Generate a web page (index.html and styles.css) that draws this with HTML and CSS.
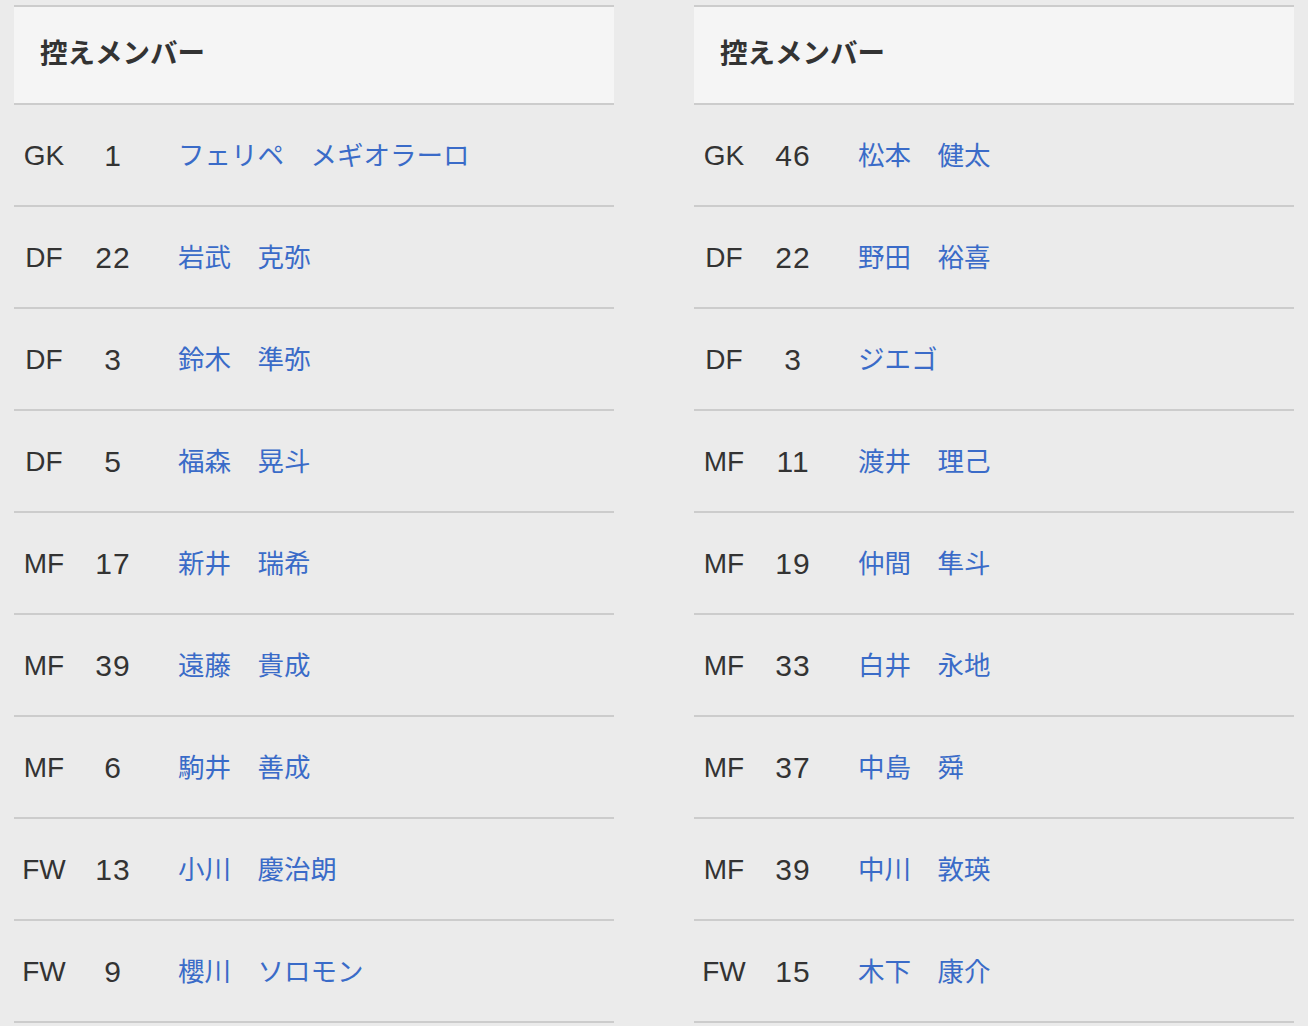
FILE: index.html
```html
<!DOCTYPE html>
<html lang="ja">
<head>
<meta charset="utf-8">
<title>控えメンバー</title>
<link rel="stylesheet" href="styles.css">
</head>
<body>
<div class="page">
  <section class="squad">
    <h2 class="squad-head">控えメンバー</h2>
    <ul class="rows">
      <li class="row"><span class="pos">GK</span><span class="num">1</span><a class="name" href="#">フェリペ　メギオラーロ</a></li>
      <li class="row"><span class="pos">DF</span><span class="num">22</span><a class="name" href="#">岩武　克弥</a></li>
      <li class="row"><span class="pos">DF</span><span class="num">3</span><a class="name" href="#">鈴木　準弥</a></li>
      <li class="row"><span class="pos">DF</span><span class="num">5</span><a class="name" href="#">福森　晃斗</a></li>
      <li class="row"><span class="pos">MF</span><span class="num">17</span><a class="name" href="#">新井　瑞希</a></li>
      <li class="row"><span class="pos">MF</span><span class="num">39</span><a class="name" href="#">遠藤　貴成</a></li>
      <li class="row"><span class="pos">MF</span><span class="num">6</span><a class="name" href="#">駒井　善成</a></li>
      <li class="row"><span class="pos">FW</span><span class="num">13</span><a class="name" href="#">小川　慶治朗</a></li>
      <li class="row"><span class="pos">FW</span><span class="num">9</span><a class="name" href="#">櫻川　ソロモン</a></li>
    </ul>
  </section>
  <section class="squad">
    <h2 class="squad-head">控えメンバー</h2>
    <ul class="rows">
      <li class="row"><span class="pos">GK</span><span class="num">46</span><a class="name" href="#">松本　健太</a></li>
      <li class="row"><span class="pos">DF</span><span class="num">22</span><a class="name" href="#">野田　裕喜</a></li>
      <li class="row"><span class="pos">DF</span><span class="num">3</span><a class="name" href="#">ジエゴ</a></li>
      <li class="row"><span class="pos">MF</span><span class="num">11</span><a class="name" href="#">渡井　理己</a></li>
      <li class="row"><span class="pos">MF</span><span class="num">19</span><a class="name" href="#">仲間　隼斗</a></li>
      <li class="row"><span class="pos">MF</span><span class="num">33</span><a class="name" href="#">白井　永地</a></li>
      <li class="row"><span class="pos">MF</span><span class="num">37</span><a class="name" href="#">中島　舜</a></li>
      <li class="row"><span class="pos">MF</span><span class="num">39</span><a class="name" href="#">中川　敦瑛</a></li>
      <li class="row"><span class="pos">FW</span><span class="num">15</span><a class="name" href="#">木下　康介</a></li>
    </ul>
  </section>
</div>
</body>
</html>
```
FILE: styles.css
```css
html, body {
  margin: 0;
  padding: 0;
  background: #ebebeb;
}
body {
  font-family: "Liberation Sans", "Noto Sans CJK JP", sans-serif;
  color: #333;
}
.page {
  display: flex;
  gap: 80px;
  padding: 5px 14px 0;
}
.squad {
  flex: 1;
  border-top: 2px solid #cccccc;
}
.squad-head {
  margin: 0;
  box-sizing: border-box;
  height: 96px;
  display: flex;
  align-items: center;
  padding: 0 0 8px 26px;
  background: #f5f5f5;
  border-bottom: 2px solid #cccccc;
  font-size: 27.5px;
  font-weight: 700;
  color: #333;
  font-family: "Noto Sans CJK JP", sans-serif;
}
.squad-head {
  height: 98px;
}
.rows {
  list-style: none;
  margin: 0;
  padding: 0;
}
.row {
  height: 100px;
  display: grid;
  grid-template-columns: 60px 78px 1fr;
  align-items: center;
  border-bottom: 2px solid #cccccc;
  font-size: 28px;
}
.pos, .num {
  text-align: center;
  color: #333;
  padding-top: 2px;
}
.num {
  font-size: 30px;
  letter-spacing: 1px;
}
.name {
  padding: 0 0 4px 26px;
  color: #3a6bc8;
  text-decoration: none;
  font-family: "Noto Sans CJK JP", sans-serif;
  font-size: 26.5px;
}
```
